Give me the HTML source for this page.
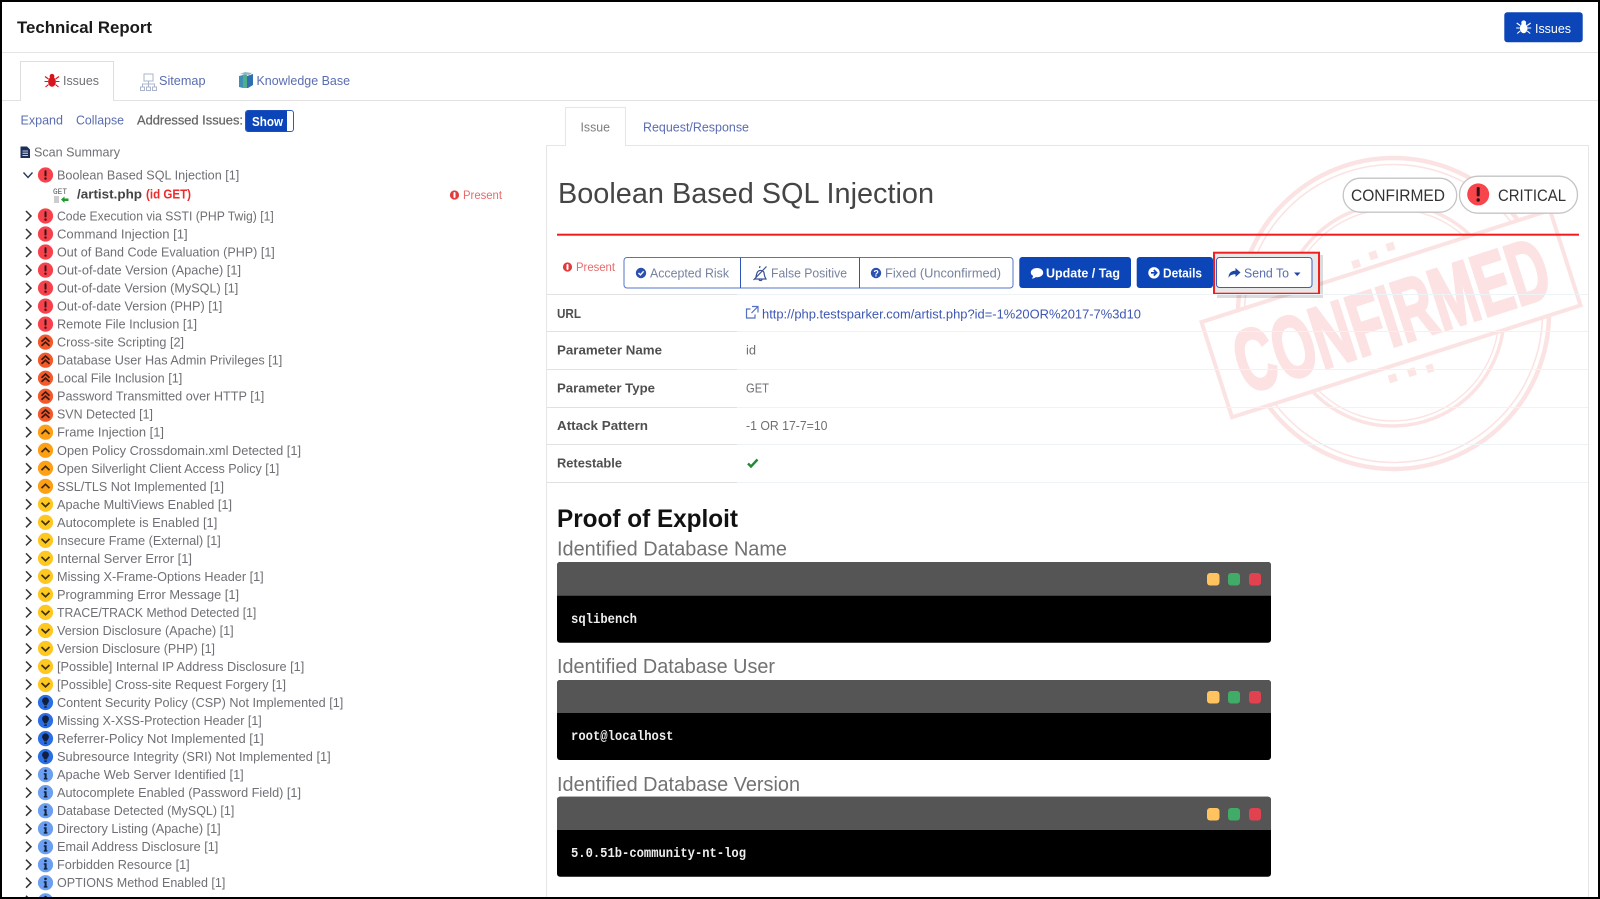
<!DOCTYPE html>
<html lang="en"><head><meta charset="utf-8"><title>Technical Report</title>
<style>
html,body{margin:0;padding:0;background:#fff;width:1600px;height:899px;overflow:hidden}
svg{display:block;filter:blur(.35px)}
text{font-family:"Liberation Sans",sans-serif;font-size:13px;fill:#6f6f75}
.lk{fill:#5a6db0}
.sb{stroke-width:.25;stroke:currentColor}
.lab{font-weight:bold;fill:#4f4f4f}
.h{font-size:20.5px;fill:#727272}
.m{font-family:"Liberation Mono",monospace;font-weight:bold;font-size:14px;fill:#eee}
.w{font-weight:bold;fill:#fff}
.b{fill:#77829f}
</style></head><body>
<svg width="1600" height="899" viewBox="0 0 1600 899" xmlns="http://www.w3.org/2000/svg">
<defs>
<g id="ch"><path d="M26 -5L31 0L26 5" fill="none" stroke="#333" stroke-width="1.5"/></g>
<g id="a"><circle cx="45.5" r="7.6" fill="#f8414b"/><rect x="44.5" y="-4.8" width="2" height="6.2" rx=".8" fill="#30161c"/><circle cx="45.5" cy="3.6" r="1.2" fill="#30161c"/></g>
<g id="b"><circle cx="45.5" r="7.6" fill="#f4592b"/><path d="M41.5 -.5L45.5 -4.2L49.5 -.5M41.5 3.6L45.5 0L49.5 3.6" fill="none" stroke="#3c1a10" stroke-width="1.7"/></g>
<g id="d"><circle cx="45.5" r="7.6" fill="#ff9f13"/><path d="M41.5 1.8L45.5 -2L49.5 1.8" fill="none" stroke="#3c2a08" stroke-width="1.7"/></g>
<g id="e"><circle cx="45.5" r="7.6" fill="#ffc81f"/><path d="M41.5 -1.5L45.5 2.3L49.5 -1.5" fill="none" stroke="#3c3008" stroke-width="1.7"/></g>
<g id="f"><circle cx="45.5" r="7.6" fill="#2b6fe6"/><path d="M45.5 -5.2a3.4 3.4 0 0 1 3 5c-.8 1.3-1.4 2-1.6 3h-2.8c-.2-1-.8-1.7-1.6-3a3.4 3.4 0 0 1 3-5zM44.3 3.8h2.4v1.6h-2.4z" fill="#10203e"/></g>
<g id="g"><circle cx="45.5" r="7.6" fill="#6b9ff2"/><circle cx="45.5" cy="-3.8" r="1.3" fill="#12223e"/><path d="M43.8 -1.4H46.6V3.4H47.4V4.9H43.8V3.4H44.6V0.1H43.8Z" fill="#12223e"/></g>
<g id="p"><circle r="4.6" fill="#e23b3b"/><rect x="-1" y="-3" width="2" height="6" rx="1" fill="#fff"/></g>
<g id="bug" fill="currentColor" stroke="currentColor"><ellipse cy="1.3" rx="3.9" ry="4.9" stroke="none"/><circle cy="-4.2" r="2.4" stroke="none"/><path d="M-3.5 -1.5L-7 -4M3.5 -1.5L7 -4M-4 1H-7.5M4 1H7.5M-3.5 4L-6.5 6.500M3.5 4L6.500 6.500" fill="none" stroke-width="1.1"/></g>
</defs>

<rect width="1600" height="899" fill="#fff"/>

<!-- stamp -->
<g fill="none" stroke="#fce3e3">
<circle cx="1393.5" cy="313.5" r="155.5" stroke-width="4.5"/>
<circle cx="1393.5" cy="313.5" r="149" stroke-width="1.6"/>
<circle cx="1393" cy="315" r="111" stroke-width="3.5"/>
<circle cx="1393" cy="315" r="106" stroke-width="1.4"/>
</g>
<g transform="translate(1391 313.7) rotate(-17.8)">
<rect x="-183" y="-50" width="366" height="100" fill="#fff" stroke="#fce3e3" stroke-width="4"/>
<text x="0" y="32" text-anchor="middle" textLength="325" lengthAdjust="spacingAndGlyphs" style="font-size:88px;font-weight:bold;fill:#fce2e2;stroke:#fce2e2;stroke-width:3">CONFIRMED</text>
<path d="M-22 -62h8v8h-8zM-3 -65h8v8h-8zM16 -68h8v8h-8zM-22 58h8v8h-8zM-2 58h8v8h-8zM17 60h7v8h-7z" fill="#fce5e5"/>
</g>

<!-- header -->
<text x="17" y="33" textLength="135" lengthAdjust="spacingAndGlyphs" style="font-size:16.5px;font-weight:bold;fill:#1a1a1a">Technical Report</text>
<rect x="2" y="52" width="1596" height="1" fill="#e4e4e4"/>
<rect x="1504.3" y="12.3" width="78.4" height="30" rx="3" fill="#0b45b8"/>
<use href="#bug" x="1523.7" y="27" style="color:#fff"/>
<text x="1535" y="32.8" textLength="36" lengthAdjust="spacingAndGlyphs" style="fill:#fff">Issues</text>

<!-- main tabs -->
<rect x="2" y="100" width="1596" height="1" fill="#e2e2e2"/>
<path d="M20.5 101V61.5H113.5V101" fill="#fff" stroke="#dedede"/>
<rect x="21" y="100" width="92" height="1.5" fill="#fff"/>
<use href="#bug" x="52" y="80.5" style="color:#d8141c"/>
<text x="63" y="85" textLength="36" lengthAdjust="spacingAndGlyphs">Issues</text>
<g fill="none" stroke="#aab5cd" stroke-width="1">
<rect x="144" y="74" width="9" height="7"/><path d="M148.5 81V84M142.5 87V84H154.5V87M148.5 84V87"/>
<rect x="140.5" y="87" width="4" height="3.5"/><rect x="146.5" y="87" width="4" height="3.5"/><rect x="152.5" y="87" width="4" height="3.5"/>
</g>
<text x="159" y="85" textLength="46.5" lengthAdjust="spacingAndGlyphs" class="lk">Sitemap</text>
<path d="M239 76l4-1v13l-4-1z" fill="#3f8fb5"/><path d="M243 75l2-1 2 1v13l-4 0z" fill="#4fae8e"/><path d="M247 76l6-2v11l-5 3h-1z" fill="#2f6fb0"/><path d="M240 74l5-2 7 1-3 2z" fill="#8fb8c8"/>
<text x="256.5" y="85" textLength="93.5" lengthAdjust="spacingAndGlyphs" class="lk">Knowledge Base</text>

<!-- controls -->
<text x="20.5" y="124.5" textLength="42.5" lengthAdjust="spacingAndGlyphs" class="lk">Expand</text>
<text x="76" y="124.5" textLength="48" lengthAdjust="spacingAndGlyphs" class="lk">Collapse</text>
<text x="137" y="124.5" textLength="106" lengthAdjust="spacingAndGlyphs" style="fill:#666;color:#666" class="sb">Addressed Issues:</text>
<rect x="245.5" y="110.5" width="48" height="21" rx="2.5" fill="#fff" stroke="#2a5cc4"/>
<path d="M246 113a2.5 2.5 0 0 1 2.5-2.5H287V131.5H248.5a2.5 2.5 0 0 1-2.5-2.500z" fill="#0b45b8"/>
<text x="252" y="126" textLength="31" lengthAdjust="spacingAndGlyphs" class="w">Show</text>

<path d="M20.5 146.5H27L30 149.5V158H20.5Z" fill="#1c2f5c"/><path d="M22.5 151h5.5M22.5 153.2h5.5M22.5 155.4h5.5" stroke="#fff" stroke-width=".8"/>
<text x="34" y="156.5" textLength="86" lengthAdjust="spacingAndGlyphs">Scan Summary</text>

<!-- tree -->
<path d="M23.5 172.5L28 177.5L32.5 172.5" fill="none" stroke="#2a3a5c" stroke-width="1.4"/>
<use href="#a" y="175"/>
<text x="57" y="179.5" textLength="182.3" lengthAdjust="spacingAndGlyphs">Boolean Based SQL Injection [1]</text>
<text x="53" y="194" textLength="14" lengthAdjust="spacingAndGlyphs" style="font-family:'Liberation Mono',monospace;font-size:8px;fill:#555">GET</text>
<path d="M54 196h5v7h-5z" fill="#ccc"/><path d="M61 199.5l3.5-3v2h4v2.5h-4v2z" fill="#1f9c2e"/>
<text x="77" y="198.5" textLength="65" lengthAdjust="spacingAndGlyphs" style="font-weight:bold;fill:#444">/artist.php</text>
<text x="146" y="198.5" textLength="45" lengthAdjust="spacingAndGlyphs" style="font-weight:bold;fill:#ee2a2a">(id GET)</text>
<use href="#p" x="454.5" y="195"/>
<text x="463" y="199" textLength="39" lengthAdjust="spacingAndGlyphs" style="font-size:12px;fill:#e86a6a">Present</text>

<use href="#ch" y="216"/><use href="#a" y="216"/><text x="57" y="220.5" textLength="216.8" lengthAdjust="spacingAndGlyphs">Code Execution via SSTI (PHP Twig) [1]</text>
<use href="#ch" y="234"/><use href="#a" y="234"/><text x="57" y="238.5" textLength="130.7" lengthAdjust="spacingAndGlyphs">Command Injection [1]</text>
<use href="#ch" y="252"/><use href="#a" y="252"/><text x="57" y="256.5" textLength="217.8" lengthAdjust="spacingAndGlyphs">Out of Band Code Evaluation (PHP) [1]</text>
<use href="#ch" y="270.1"/><use href="#a" y="270.1"/><text x="57" y="274.6" textLength="184" lengthAdjust="spacingAndGlyphs">Out-of-date Version (Apache) [1]</text>
<use href="#ch" y="288.1"/><use href="#a" y="288.1"/><text x="57" y="292.6" textLength="181.3" lengthAdjust="spacingAndGlyphs">Out-of-date Version (MySQL) [1]</text>
<use href="#ch" y="306.1"/><use href="#a" y="306.1"/><text x="57" y="310.6" textLength="165.3" lengthAdjust="spacingAndGlyphs">Out-of-date Version (PHP) [1]</text>
<use href="#ch" y="324.1"/><use href="#a" y="324.1"/><text x="57" y="328.6" textLength="140" lengthAdjust="spacingAndGlyphs">Remote File Inclusion [1]</text>
<use href="#ch" y="342.1"/><use href="#b" y="342.1"/><text x="57" y="346.6" textLength="127" lengthAdjust="spacingAndGlyphs">Cross-site Scripting [2]</text>
<use href="#ch" y="360.2"/><use href="#b" y="360.2"/><text x="57" y="364.7" textLength="225.3" lengthAdjust="spacingAndGlyphs">Database User Has Admin Privileges [1]</text>
<use href="#ch" y="378.2"/><use href="#b" y="378.2"/><text x="57" y="382.7" textLength="125.3" lengthAdjust="spacingAndGlyphs">Local File Inclusion [1]</text>
<use href="#ch" y="396.2"/><use href="#b" y="396.2"/><text x="57" y="400.7" textLength="207.3" lengthAdjust="spacingAndGlyphs">Password Transmitted over HTTP [1]</text>
<use href="#ch" y="414.2"/><use href="#b" y="414.2"/><text x="57" y="418.7" textLength="96" lengthAdjust="spacingAndGlyphs">SVN Detected [1]</text>
<use href="#ch" y="432.2"/><use href="#d" y="432.2"/><text x="57" y="436.7" textLength="107" lengthAdjust="spacingAndGlyphs">Frame Injection [1]</text>
<use href="#ch" y="450.3"/><use href="#d" y="450.3"/><text x="57" y="454.8" textLength="244" lengthAdjust="spacingAndGlyphs">Open Policy Crossdomain.xml Detected [1]</text>
<use href="#ch" y="468.3"/><use href="#d" y="468.3"/><text x="57" y="472.8" textLength="222.3" lengthAdjust="spacingAndGlyphs">Open Silverlight Client Access Policy [1]</text>
<use href="#ch" y="486.3"/><use href="#d" y="486.3"/><text x="57" y="490.8" textLength="167" lengthAdjust="spacingAndGlyphs">SSL/TLS Not Implemented [1]</text>
<use href="#ch" y="504.3"/><use href="#e" y="504.3"/><text x="57" y="508.8" textLength="175" lengthAdjust="spacingAndGlyphs">Apache MultiViews Enabled [1]</text>
<use href="#ch" y="522.3"/><use href="#e" y="522.3"/><text x="57" y="526.8" textLength="160.3" lengthAdjust="spacingAndGlyphs">Autocomplete is Enabled [1]</text>
<use href="#ch" y="540.4"/><use href="#e" y="540.4"/><text x="57" y="544.9" textLength="163.7" lengthAdjust="spacingAndGlyphs">Insecure Frame (External) [1]</text>
<use href="#ch" y="558.4"/><use href="#e" y="558.4"/><text x="57" y="562.9" textLength="135" lengthAdjust="spacingAndGlyphs">Internal Server Error [1]</text>
<use href="#ch" y="576.4"/><use href="#e" y="576.4"/><text x="57" y="580.9" textLength="206.7" lengthAdjust="spacingAndGlyphs">Missing X-Frame-Options Header [1]</text>
<use href="#ch" y="594.4"/><use href="#e" y="594.4"/><text x="57" y="598.9" textLength="182" lengthAdjust="spacingAndGlyphs">Programming Error Message [1]</text>
<use href="#ch" y="612.4"/><use href="#e" y="612.4"/><text x="57" y="616.9" textLength="199.3" lengthAdjust="spacingAndGlyphs">TRACE/TRACK Method Detected [1]</text>
<use href="#ch" y="630.5"/><use href="#e" y="630.5"/><text x="57" y="635" textLength="176.7" lengthAdjust="spacingAndGlyphs">Version Disclosure (Apache) [1]</text>
<use href="#ch" y="648.5"/><use href="#e" y="648.5"/><text x="57" y="653" textLength="158" lengthAdjust="spacingAndGlyphs">Version Disclosure (PHP) [1]</text>
<use href="#ch" y="666.5"/><use href="#e" y="666.5"/><text x="57" y="671" textLength="247.3" lengthAdjust="spacingAndGlyphs">[Possible] Internal IP Address Disclosure [1]</text>
<use href="#ch" y="684.5"/><use href="#e" y="684.5"/><text x="57" y="689" textLength="229" lengthAdjust="spacingAndGlyphs">[Possible] Cross-site Request Forgery [1]</text>
<use href="#ch" y="702.5"/><use href="#f" y="702.5"/><text x="57" y="707" textLength="286.3" lengthAdjust="spacingAndGlyphs">Content Security Policy (CSP) Not Implemented [1]</text>
<use href="#ch" y="720.6"/><use href="#f" y="720.6"/><text x="57" y="725.1" textLength="204.7" lengthAdjust="spacingAndGlyphs">Missing X-XSS-Protection Header [1]</text>
<use href="#ch" y="738.6"/><use href="#f" y="738.6"/><text x="57" y="743.1" textLength="206.7" lengthAdjust="spacingAndGlyphs">Referrer-Policy Not Implemented [1]</text>
<use href="#ch" y="756.6"/><use href="#f" y="756.6"/><text x="57" y="761.1" textLength="273.7" lengthAdjust="spacingAndGlyphs">Subresource Integrity (SRI) Not Implemented [1]</text>
<use href="#ch" y="774.6"/><use href="#g" y="774.6"/><text x="57" y="779.1" textLength="186.7" lengthAdjust="spacingAndGlyphs">Apache Web Server Identified [1]</text>
<use href="#ch" y="792.6"/><use href="#g" y="792.6"/><text x="57" y="797.1" textLength="244" lengthAdjust="spacingAndGlyphs">Autocomplete Enabled (Password Field) [1]</text>
<use href="#ch" y="810.7"/><use href="#g" y="810.7"/><text x="57" y="815.2" textLength="177.3" lengthAdjust="spacingAndGlyphs">Database Detected (MySQL) [1]</text>
<use href="#ch" y="828.7"/><use href="#g" y="828.7"/><text x="57" y="833.2" textLength="163.7" lengthAdjust="spacingAndGlyphs">Directory Listing (Apache) [1]</text>
<use href="#ch" y="846.7"/><use href="#g" y="846.7"/><text x="57" y="851.2" textLength="161.3" lengthAdjust="spacingAndGlyphs">Email Address Disclosure [1]</text>
<use href="#ch" y="864.7"/><use href="#g" y="864.7"/><text x="57" y="869.2" textLength="132.7" lengthAdjust="spacingAndGlyphs">Forbidden Resource [1]</text>
<use href="#ch" y="882.7"/><use href="#g" y="882.7"/><text x="57" y="887.2" textLength="168.3" lengthAdjust="spacingAndGlyphs">OPTIONS Method Enabled [1]</text>
<use href="#ch" y="900.8"/><use href="#g" y="900.8"/>

<!-- right panel -->
<path d="M546.5 898V145.5H565.5V107.5H625.5V145.5H1588.5V898" fill="none" stroke="#e6e6e6"/>
<rect x="566" y="144.5" width="59" height="2" fill="#fff"/>
<text x="580.5" y="131.5" textLength="29.5" lengthAdjust="spacingAndGlyphs" style="fill:#7c7c7c">Issue</text>
<text x="643" y="131.5" textLength="106" lengthAdjust="spacingAndGlyphs" class="lk">Request/Response</text>

<text x="558" y="203" textLength="376" lengthAdjust="spacingAndGlyphs" style="font-size:29px;fill:#454545">Boolean Based SQL Injection</text>

<rect x="1343.2" y="178.2" width="113.5" height="34" rx="17" fill="#fff" stroke="#c4c4c4" stroke-width="1.3"/>
<text x="1351" y="201" textLength="94" lengthAdjust="spacingAndGlyphs" style="font-size:16.5px;fill:#333">CONFIRMED</text>
<rect x="1459.5" y="176.2" width="118" height="37" rx="18.5" fill="#fff" stroke="#c4c4c4" stroke-width="1.3"/>
<circle cx="1478.2" cy="194.4" r="11" fill="#f8444b"/><rect x="1476.7" y="187" width="3" height="9.4" rx="1" fill="#2e1418"/><circle cx="1478.2" cy="200" r="1.7" fill="#2e1418"/>
<text x="1498" y="201" textLength="68" lengthAdjust="spacingAndGlyphs" style="font-size:16.5px;fill:#333">CRITICAL</text>

<rect x="557" y="233.7" width="1022" height="2" fill="#f21c1c"/>

<use href="#p" x="567.5" y="267"/>
<text x="576" y="271" textLength="39" lengthAdjust="spacingAndGlyphs" style="font-size:12px;fill:#e86a6a">Present</text>

<rect x="624" y="257.5" width="389" height="30.5" rx="3" fill="#fff" stroke="#5474c6"/>
<path d="M740.5 257.5V288M859.5 257.5V288" stroke="#2f55b8"/>
<circle cx="641" cy="273" r="5.2" fill="#2a50b2"/><path d="M638.5 273l1.9 1.9 3.2-3.6" fill="none" stroke="#fff" stroke-width="1.4"/>
<text x="650" y="277.5" textLength="79" lengthAdjust="spacingAndGlyphs" class="b">Accepted Risk</text>
<path d="M755 279c1.5-1.5 1-5 2.5-7 1.3-2 4.5-2 6-.5 1 1.500 .5 4 1.500 5.500l1 2zM753.500 280L766.500 266.500M760 266l-.5 2M759 279.500a1.600 1.600 0 0 0 3 0" fill="none" stroke="#3a5390" stroke-width="1.2"/>
<text x="771" y="277.5" textLength="76" lengthAdjust="spacingAndGlyphs" class="b">False Positive</text>
<circle cx="876" cy="273" r="5.2" fill="#2a50b2"/><text x="873.4" y="276.5" style="font-size:9px;font-weight:bold;fill:#fff">?</text>
<text x="885" y="277.5" textLength="116" lengthAdjust="spacingAndGlyphs" class="b">Fixed (Unconfirmed)</text>

<rect x="1019.3" y="257" width="111.7" height="31" rx="3" fill="#0b45b8"/>
<path d="M1037 268c3.6 0 6.2 2 6.2 4.6s-2.6 4.6-6.2 4.6l-1.3-.1c-1 .9-2.2 1.400-4 1.500 .8-.8 1.300-1.700 1.400-2.700-1.400-.8-2.300-2-2.300-3.300 0-2.600 2.600-4.600 6.200-4.600z" fill="#fff"/>
<text x="1046" y="277.5" textLength="74" lengthAdjust="spacingAndGlyphs" class="w">Update / Tag</text>
<rect x="1136.7" y="257" width="76.3" height="31" rx="3" fill="#0b45b8"/>
<circle cx="1154" cy="272.8" r="5.7" fill="#fff"/><path d="M1151 272.8h5M1153.8 270l2.800 2.800-2.800 2.800" fill="none" stroke="#0b45b8" stroke-width="1.7"/>
<text x="1163" y="277.5" textLength="39" lengthAdjust="spacingAndGlyphs" class="w">Details</text>

<rect x="1217" y="255" width="106" height="43" fill="#000" opacity=".14"/>
<rect x="1214" y="252.7" width="105" height="41" fill="#e8e8e8" stroke="#ee2121" stroke-width="2"/>
<rect x="1216.5" y="257.5" width="95.5" height="30" rx="3" fill="#fff" stroke="#3a5fc0"/>
<path d="M1240.5 272.5l-5-4.500v2.600c-4 .1-7 2-7 7.400 1.200-2.800 3.500-3.800 7-3.800v2.800z" fill="#1c46a8"/>
<text x="1244" y="277.5" textLength="45" lengthAdjust="spacingAndGlyphs" class="lk">Send To</text>
<path d="M1294 272.5h6.5l-3.250 3.500z" fill="#1c46a8"/>

<!-- table -->
<g>
<rect x="547" y="294" width="190" height="1" fill="#e1e1e1"/><rect x="737" y="294" width="851" height="1" fill="#eef3f8"/>
<rect x="547" y="331" width="190" height="1" fill="#e1e1e1"/><rect x="737" y="331" width="851" height="1" fill="#eef3f8"/>
<rect x="547" y="369" width="190" height="1" fill="#e1e1e1"/><rect x="737" y="369" width="851" height="1" fill="#eef3f8"/>
<rect x="547" y="407" width="190" height="1" fill="#e1e1e1"/><rect x="737" y="407" width="851" height="1" fill="#eef3f8"/>
<rect x="547" y="444" width="190" height="1" fill="#e1e1e1"/><rect x="737" y="444" width="851" height="1" fill="#eef3f8"/>
<rect x="547" y="482" width="190" height="1" fill="#e1e1e1"/><rect x="737" y="482" width="851" height="1" fill="#eef3f8"/>
</g>
<text x="557" y="318" textLength="24" lengthAdjust="spacingAndGlyphs" class="lab">URL</text>
<path d="M755 314.5v3.500h-8.500v-9h4M752 306.500h6v6M758 306.500l-6.500 6.500" fill="none" stroke="#5470c0" stroke-width="1.2"/>
<text x="762" y="318.5" textLength="379" lengthAdjust="spacingAndGlyphs" style="fill:#3e57b4">http://php.testsparker.com/artist.php?id=-1%20OR%2017-7%3d10</text>
<text x="557" y="354.5" textLength="105" lengthAdjust="spacingAndGlyphs" class="lab">Parameter Name</text>
<text x="746" y="354.5" textLength="10" lengthAdjust="spacingAndGlyphs">id</text>
<text x="557" y="392.5" textLength="98" lengthAdjust="spacingAndGlyphs" class="lab">Parameter Type</text>
<text x="746" y="392.5" textLength="23" lengthAdjust="spacingAndGlyphs">GET</text>
<text x="557" y="430" textLength="91" lengthAdjust="spacingAndGlyphs" class="lab">Attack Pattern</text>
<text x="746" y="430" textLength="81.5" lengthAdjust="spacingAndGlyphs">-1 OR 17-7=10</text>
<text x="557" y="467.5" textLength="65" lengthAdjust="spacingAndGlyphs" class="lab">Retestable</text>
<path d="M748 463.5l3 3 6.500-7" fill="none" stroke="#1f8a36" stroke-width="2.4"/>

<!-- proof -->
<text x="557" y="527" textLength="181" lengthAdjust="spacingAndGlyphs" style="font-size:25px;font-weight:bold;fill:#111">Proof of Exploit</text>

<text x="557" y="555.5" textLength="230" lengthAdjust="spacingAndGlyphs" class="h">Identified Database Name</text>
<rect x="557" y="562" width="714" height="80.7" rx="3" fill="#000"/>
<path d="M557 595.7V565a3 3 0 0 1 3-3H1268a3 3 0 0 1 3 3V595.7Z" fill="#555"/>
<rect x="1207" y="573" width="12.5" height="12.5" rx="3" fill="#ffc45f"/><rect x="1228" y="573" width="12" height="12.5" rx="3" fill="#41ab68"/><rect x="1249" y="573" width="12" height="12.5" rx="3" fill="#e2414f"/>
<text x="571" y="623" textLength="66" lengthAdjust="spacingAndGlyphs" class="m">sqlibench</text>

<text x="557" y="672.8" textLength="218" lengthAdjust="spacingAndGlyphs" class="h">Identified Database User</text>
<rect x="557" y="680" width="714" height="80" rx="3" fill="#000"/>
<path d="M557 713V683a3 3 0 0 1 3-3H1268a3 3 0 0 1 3 3V713Z" fill="#555"/>
<rect x="1207" y="691" width="12.5" height="12.5" rx="3" fill="#ffc45f"/><rect x="1228" y="691" width="12" height="12.5" rx="3" fill="#41ab68"/><rect x="1249" y="691" width="12" height="12.5" rx="3" fill="#e2414f"/>
<text x="571" y="740" textLength="102.5" lengthAdjust="spacingAndGlyphs" class="m">root@localhost</text>

<text x="557" y="790.8" textLength="243" lengthAdjust="spacingAndGlyphs" class="h">Identified Database Version</text>
<rect x="557" y="796.7" width="714" height="80" rx="3" fill="#000"/>
<path d="M557 830V799.7a3 3 0 0 1 3-3H1268a3 3 0 0 1 3 3V830Z" fill="#555"/>
<rect x="1207" y="808" width="12.5" height="12.5" rx="3" fill="#ffc45f"/><rect x="1228" y="808" width="12" height="12.5" rx="3" fill="#41ab68"/><rect x="1249" y="808" width="12" height="12.5" rx="3" fill="#e2414f"/>
<text x="571" y="857" textLength="175" lengthAdjust="spacingAndGlyphs" class="m">5.0.51b-community-nt-log</text>

<!-- screenshot frame -->
<path d="M0 0H1600V899H0ZM2 2V897H1598V2Z" fill="#000" fill-rule="evenodd"/>
</svg>
</body></html>
